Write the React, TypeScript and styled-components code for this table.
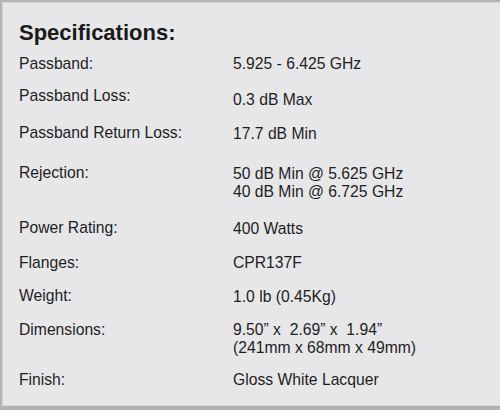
import React from "react";
import styled, { createGlobalStyle } from "styled-components";

const Global = createGlobalStyle`
  html, body { margin: 0; padding: 0; background: #e7e7e9; }
  * { box-sizing: border-box; }
`;

const Panel = styled.div`
  width: 500px;
  height: 410px;
  background: #e7e7e9;
  border-top: 2px solid #b4b4b6;
  border-left: 2px solid #b4b4b6;
  border-bottom: 4px solid #b2b2b4;
  box-shadow: inset 1px 1px 0 #d6d6d8, inset 0 -1px 0 #d8d8da;
  padding: 18px 0 0 17px;
  font-family: "Liberation Sans", Arial, sans-serif;
  color: #1e1e1e;
`;

const Title = styled.h2`
  margin: 0;
  font-size: 22px;
  line-height: 26px;
  font-weight: 700;
  color: #1a1a1a;
`;

const Specs = styled.dl`
  margin: 0;
  display: grid;
  grid-template-columns: 214px 1fr;
  font-size: 15.7px;
  line-height: 18.5px;
`;

const Label = styled.dt<{ $gap: number; $lift?: number }>`
  margin: ${(p) => p.$gap - (p.$lift ?? 0)}px 0 0 0;
  padding: 0;
`;

const Value = styled.dd<{ $gap: number }>`
  margin: ${(p) => p.$gap}px 0 0 0;
  padding: 0;
`;

type Row = { label: string; lines: string[]; gap: number; lift?: number };

const rows: Row[] = [
  { label: "Passband:", lines: ["5.925 - 6.425 GHz"], gap: 8.5 },
  { label: "Passband Loss:", lines: ["0.3 dB Max"], gap: 17.5, lift: 4 },
  { label: "Passband Return Loss:", lines: ["17.7 dB Min"], gap: 15.5, lift: 1 },
  {
    label: "Rejection:",
    lines: ["50 dB Min @ 5.625 GHz", "40 dB Min @ 6.725 GHz"],
    gap: 21.5,
    lift: 1,
  },
  { label: "Power Rating:", lines: ["400 Watts"], gap: 18, lift: 1 },
  { label: "Flanges:", lines: ["CPR137F"], gap: 15.5 },
  { label: "Weight:", lines: ["1.0 lb (0.45Kg)"], gap: 15.5, lift: 1 },
  {
    label: "Dimensions:",
    lines: ["9.50\u201D x\u00A0 2.69\u201D x\u00A0 1.94\u201D", "(241mm x 68mm x 49mm)"],
    gap: 14.5,
  },
  { label: "Finish:", lines: ["Gloss White Lacquer"], gap: 13 },
];

export default function App() {
  return (
    <>
      <Global />
      <Panel>
        <Title>Specifications:</Title>
        <Specs>
          {rows.map((r) => (
            <React.Fragment key={r.label}>
              <Label $gap={r.gap} $lift={r.lift}>
                {r.label}
              </Label>
              <Value $gap={r.gap}>
                {r.lines.map((l, i) => (
                  <React.Fragment key={i}>
                    {i > 0 && <br />}
                    {l}
                  </React.Fragment>
                ))}
              </Value>
            </React.Fragment>
          ))}
        </Specs>
      </Panel>
    </>
  );
}
